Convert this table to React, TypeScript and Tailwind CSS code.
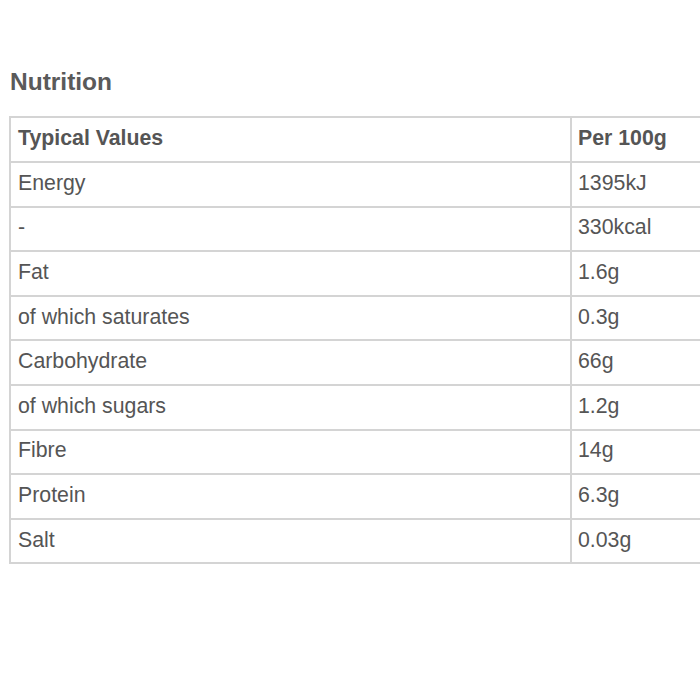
const rows: [string, string][] = [
  ["Energy", "1395kJ"],
  ["-", "330kcal"],
  ["Fat", "1.6g"],
  ["of which saturates", "0.3g"],
  ["Carbohydrate", "66g"],
  ["of which sugars", "1.2g"],
  ["Fibre", "14g"],
  ["Protein", "6.3g"],
  ["Salt", "0.03g"],
];

const App = () => {
  return (
    <div className="w-[700px] h-[700px] overflow-hidden bg-white text-[#555] font-['Liberation_Sans',Arial,sans-serif]">
      <div className="pl-[9px] pt-[68px]">
        <h2 className="pl-px text-[24.5px] font-bold leading-[28px] text-[#5a5a5a]">Nutrition</h2>
        <table className="mt-[20px] w-[780px] border-collapse text-[21.3px] table-fixed">
          <colgroup>
            <col className="w-[561px]" />
            <col />
          </colgroup>
          <thead>
            <tr className="h-[45px]">
              <th className="border-2 border-[#d4d4d4] pl-[7px] pb-px text-left font-bold">Typical Values</th>
              <th className="border-2 border-[#d4d4d4] pl-[6px] pb-px text-left font-bold">Per 100g</th>
            </tr>
          </thead>
          <tbody>
            {rows.map(([name, value], i) => (
              <tr key={i} className="h-[44.6px]">
                <td className="border-2 border-[#d4d4d4] pl-[7px] pb-px">{name}</td>
                <td className="border-2 border-[#d4d4d4] pl-[6px] pb-px">{value}</td>
              </tr>
            ))}
          </tbody>
        </table>
      </div>
    </div>
  );
};

export default App;
